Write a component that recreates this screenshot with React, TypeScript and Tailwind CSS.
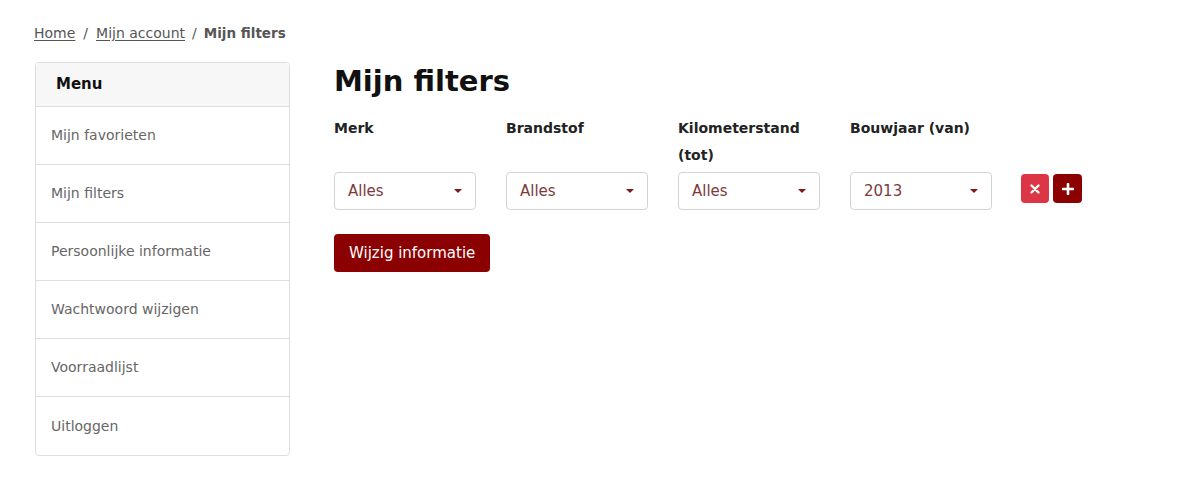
const menuItems = [
  'Mijn favorieten',
  'Mijn filters',
  'Persoonlijke informatie',
  'Wachtwoord wijzigen',
  'Voorraadlijst',
  'Uitloggen',
];

const filters = [
  { label: 'Merk', value: 'Alles' },
  { label: 'Brandstof', value: 'Alles' },
  { label: 'Kilometerstand (tot)', value: 'Alles' },
  { label: 'Bouwjaar (van)', value: '2013' },
];

function Select({ value }: { value: string }) {
  return (
    <div className="flex h-[38px] w-[142px] items-center justify-between rounded border border-[#d3d3d3] bg-white pl-[13px] pr-[13px]">
      <span className="text-[15px] text-[#7d3b3b]">{value}</span>
      <span className="h-0 w-0 border-x-[4px] border-t-[4px] border-x-transparent border-t-[#7d1a1a]" />
    </div>
  );
}

export default function App() {
  return (
    <div className="min-h-[490px] bg-white px-[34px] pt-[22px] text-[#555]" style={{ fontFamily: '"DejaVu Sans", sans-serif' }}>
      <nav className="flex items-center text-[14px] leading-[22px] text-[#555]">
        <a href="#" className="underline underline-offset-2">Home</a>
        <span className="mx-[8px]">/</span>
        <a href="#" className="underline underline-offset-2">Mijn account</a>
        <span className="mx-[7px]">/</span>
        <span className="text-[13.5px] font-bold">Mijn filters</span>
      </nav>

      <div className="mt-[18px] flex gap-[44px]">
        <aside className="ml-[1px] w-[255px] shrink-0 self-start overflow-hidden rounded border border-[#dedede]">
          <div className="flex h-[44px] items-center border-b border-[#dedede] bg-[#f7f7f7] pl-[20px] text-[15px] font-semibold text-[#111]">
            Menu
          </div>
          {menuItems.map((item, i) => (
            <div
              key={item}
              className={`flex h-[58px] items-center pl-[15px] text-[14px] text-[#666] ${i < menuItems.length - 1 ? 'border-b border-[#dedede]' : ''}`}
            >
              {item}
            </div>
          ))}
        </aside>

        <main className="flex-1">
          <h1 className="text-[29px] font-bold leading-[38px] text-[#111]">Mijn filters</h1>
          <div className="mt-[15px] flex items-end">
            {filters.map((f) => (
              <div key={f.label} className="w-[172px]">
                <div className="h-[54px] w-[130px] text-[14px] font-semibold leading-[27px] text-[#222]">{f.label}</div>
                <div className="mt-[3px]">
                  <Select value={f.value} />
                </div>
              </div>
            ))}
            <div className="mb-[7px] ml-[-1px] flex gap-[4px]">
              <button className="flex h-[29px] w-[28px] items-center justify-center rounded bg-[#dc3545]">
                <svg width="10" height="10" viewBox="0 0 10 10">
                  <path d="M1.5 1.5 L8.5 8.5 M8.5 1.5 L1.5 8.5" stroke="white" strokeWidth="2.4" strokeLinecap="round" />
                </svg>
              </button>
              <button className="flex h-[29px] w-[29px] items-center justify-center rounded bg-[#8b0000]">
                <svg width="12" height="12" viewBox="0 0 12 12">
                  <path d="M6 1 V11 M1 6 H11" stroke="white" strokeWidth="2.6" strokeLinecap="round" />
                </svg>
              </button>
            </div>
          </div>
          <button className="mt-[24px] h-[38px] rounded bg-[#8b0000] px-[15px] text-[15px] font-medium text-white">
            Wijzig informatie
          </button>
        </main>
      </div>
    </div>
  );
}
